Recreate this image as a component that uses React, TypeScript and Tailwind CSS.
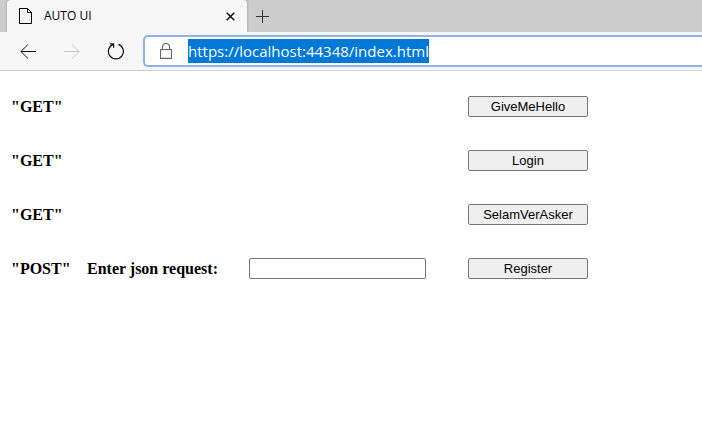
type Endpoint = {
  method: string;
  name: string;
  hasBody?: boolean;
};

const endpoints: Endpoint[] = [
  { method: "GET", name: "GiveMeHello" },
  { method: "GET", name: "Login" },
  { method: "GET", name: "SelamVerAsker" },
  { method: "POST", name: "Register", hasBody: true },
];

function PageIcon() {
  return (
    <svg width="14" height="16" viewBox="0 0 14 16" fill="none" stroke="#000" strokeWidth="1" aria-hidden="true">
      <path d="M.5 .5H8.5L12.5 4.5V15.5H.5Z" />
      <path d="M8.5 .5V4.5H12.5" />
    </svg>
  );
}

function CloseIcon() {
  return (
    <svg width="9" height="9" viewBox="0 0 9 9" stroke="#111" strokeWidth="1.5" aria-hidden="true">
      <path d="M.7 .7L8.3 8.3M8.3 .7L.7 8.3" />
    </svg>
  );
}

function PlusIcon() {
  return (
    <svg width="13" height="13" viewBox="0 0 13 13" stroke="#333" strokeWidth="1" aria-hidden="true">
      <path d="M6.5 0V13M0 6.5H13" />
    </svg>
  );
}

function BackIcon() {
  return (
    <svg width="16" height="16" viewBox="0 0 16 16" fill="none" stroke="#111" strokeWidth="1" aria-hidden="true">
      <path d="M16 8.5H.8M8 1.5L.9 8.5L8 15.5" />
    </svg>
  );
}

function ForwardIcon() {
  return (
    <svg width="16" height="16" viewBox="0 0 16 16" fill="none" stroke="#cacaca" strokeWidth="1" aria-hidden="true">
      <path d="M0 8.5H15.2M8 1.5L15.1 8.5L8 15.5" />
    </svg>
  );
}

function ReloadIcon() {
  return (
    <svg width="18" height="18" viewBox="0 0 18 18" fill="none" stroke="#111" strokeWidth="1.2" aria-hidden="true">
      <path d="M11.4 2.4A7.5 7.5 0 1 1 6.4 2.4" />
      <path d="M2.8 1.9H6.6V5.8" />
    </svg>
  );
}

function LockIcon() {
  return (
    <svg width="12" height="16" viewBox="0 0 12 16" fill="none" stroke="#666" strokeWidth="1.1" aria-hidden="true">
      <path d="M.5 6.5H11.5V15.4H.5Z" />
      <path d="M2.5 6.5V4A3.5 3.5 0 0 1 9.5 4V6.5" />
    </svg>
  );
}

function TabStrip() {
  return (
    <div className="flex h-8 items-stretch overflow-hidden bg-[#cdcdcd] pl-[7px]">
      <div className="flex w-60 items-center rounded-t bg-[#f7f7f7] pr-3 pl-3 shadow-[0_0_3px_#00000040]">
        <PageIcon />
        <span className="ml-[11px] flex-1 text-xs text-black">AUTO UI</span>
        <button type="button" aria-label="Close tab">
          <CloseIcon />
        </button>
      </div>
      <button type="button" aria-label="New tab" className="ml-[9px]">
        <PlusIcon />
      </button>
    </div>
  );
}

function Toolbar() {
  return (
    <div className="flex items-center border-b border-[#cfcfcf] bg-[#f7f7f7] pt-[3px] pb-[3px] pl-5">
      <div className="flex items-center">
        <button type="button" aria-label="Back">
          <BackIcon />
        </button>
        <button type="button" aria-label="Forward" className="ml-7" disabled>
          <ForwardIcon />
        </button>
        <button type="button" aria-label="Reload" className="ml-[27px]">
          <ReloadIcon />
        </button>
      </div>
      <div className="ml-[18px] flex h-8 flex-1 items-center rounded-l-[5px] border-2 border-r-0 border-[#8fb1ec] bg-white pl-[15px]">
        <LockIcon />
        <input
          type="text"
          aria-label="Address"
          defaultValue="https://localhost:44348/index.html"
          className="ml-4 field-sizing-content h-6 bg-[#0078d7] text-[15px] text-white outline-none"
        />
      </div>
    </div>
  );
}

function EndpointRow({ method, name, hasBody }: Endpoint) {
  return (
    <form
      className="grid grid-cols-[76px_162px_219px_120px] items-center leading-5"
      onSubmit={(event) => event.preventDefault()}
    >
      <b className="pt-px">"{method}"</b>
      {hasBody && (
        <>
          <label htmlFor={name} className="pt-px font-bold whitespace-nowrap">
            Enter json request:
          </label>
          <input
            id={name}
            type="text"
            className="h-[21px] w-[177px] rounded-xs border border-[#767676] bg-white px-1 font-['Liberation_Sans',Arial,sans-serif] text-[13px]"
          />
        </>
      )}
      <button
        type="submit"
        className="col-start-4 h-[21px] rounded-xs border border-[#767676] bg-[#efefef] pt-px font-['Liberation_Sans',Arial,sans-serif] text-[13px] leading-[18px]"
      >
        {name}
      </button>
    </form>
  );
}

export default function App() {
  return (
    <div className="min-h-screen overflow-x-hidden bg-white text-black">
      <header className="font-['Open_Sans','Segoe_UI',sans-serif]">
        <TabStrip />
        <Toolbar />
      </header>
      <main className="flex flex-col gap-[33px] pt-[25px] pl-[11px] font-['Liberation_Serif','Times_New_Roman',serif] text-base">
        {endpoints.map((endpoint) => (
          <EndpointRow key={endpoint.name} {...endpoint} />
        ))}
      </main>
    </div>
  );
}
